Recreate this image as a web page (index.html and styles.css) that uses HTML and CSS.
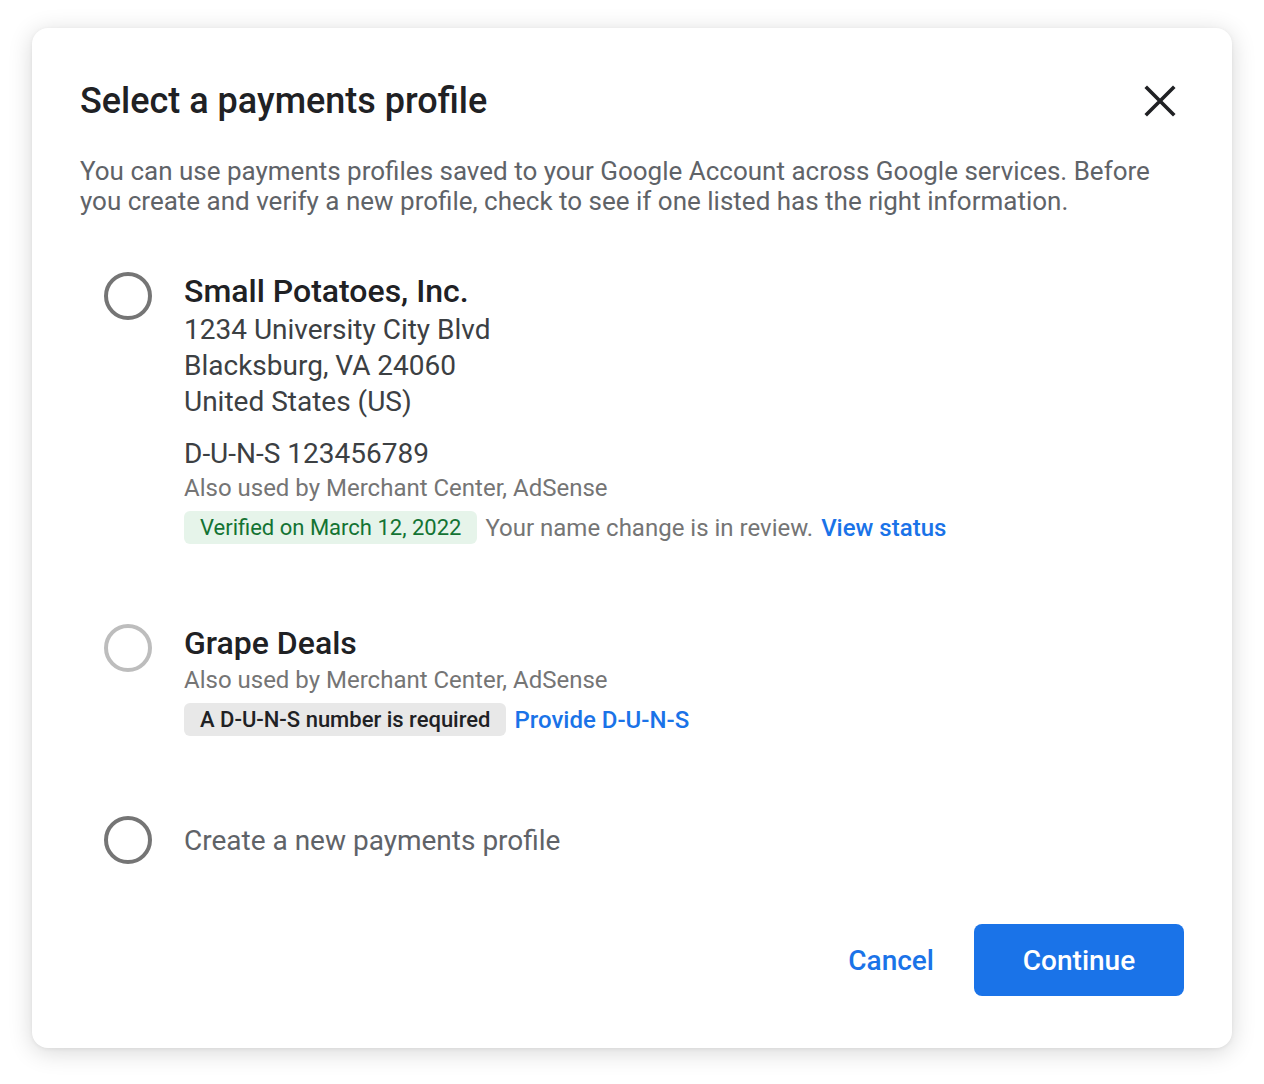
FILE: index.html
```html
<!DOCTYPE html>
<html>
<head>
    <title>Select a payments profile</title>
    <link rel="stylesheet" href="styles.css">
</head>
<body>
    <div class="dialog">
        <div class="dialog-header">
            <h1 class="dialog-title">Select a payments profile</h1>
            <button class="close-button" aria-label="Close">
                <svg width="32" height="32" viewBox="0 0 32 32">
                    <path d="M3 3 L29 29 M29 3 L3 29" stroke="#202124" stroke-width="3.6" stroke-linecap="square"/>
                </svg>
            </button>
        </div>

        <p class="intro">You can use payments profiles saved to your Google Account across Google services. Before you create and verify a new profile, check to see if one listed has the right information.</p>

        <div class="profile-list">
            <div class="profile">
                <span class="radio"></span>
                <div class="profile-info">
                    <div class="profile-name">Small Potatoes, Inc.</div>
                    <div class="address">
                        1234 University City Blvd<br>
                        Blacksburg, VA 24060<br>
                        United States (US)
                    </div>
                    <div class="duns">D-U-N-S 123456789</div>
                    <div class="used-by">Also used by Merchant Center, AdSense</div>
                    <div class="status-row">
                        <span class="chip chip-verified">Verified on March 12, 2022</span>
                        <span class="status-note">Your name change is in review.</span>
                        <a class="link" href="#">View status</a>
                    </div>
                </div>
            </div>

            <div class="profile profile-second">
                <span class="radio radio-light"></span>
                <div class="profile-info">
                    <div class="profile-name">Grape Deals</div>
                    <div class="used-by">Also used by Merchant Center, AdSense</div>
                    <div class="status-row">
                        <span class="chip chip-required">A D-U-N-S number is required</span>
                        <a class="link" href="#">Provide D-U-N-S</a>
                    </div>
                </div>
            </div>

            <div class="profile profile-new">
                <span class="radio"></span>
                <div class="new-label">Create a new payments profile</div>
            </div>
        </div>

        <div class="dialog-actions">
            <button class="btn-text">Cancel</button>
            <button class="btn-primary">Continue</button>
        </div>
    </div>
</body>
</html>
```

FILE: styles.css
```css
body, html {
    margin: 0;
    padding: 0;
    background: #ffffff;
    font-family: Roboto, "Liberation Sans", sans-serif;
}

body {
    padding: 28px 32px;
}

.dialog {
    width: 1200px;
    height: 1020px;
    box-sizing: border-box;
    background: #fff;
    border-radius: 16px;
    box-shadow: 0 4px 24px rgba(0, 0, 0, 0.16), 0 1px 4px rgba(0, 0, 0, 0.06);
    padding: 50px 48px 0 48px;
    display: flex;
    flex-direction: column;
}

.dialog-header {
    display: flex;
    align-items: center;
    justify-content: space-between;
    height: 46px;
}

.dialog-title {
    margin: 0;
    font-size: 36px;
    font-weight: 500;
    color: #202124;
}

.close-button {
    background: none;
    border: none;
    padding: 0;
    margin-right: 8px;
    width: 32px;
    height: 32px;
    cursor: pointer;
}

.intro {
    margin: 32px 0 0 0;
    font-size: 26px;
    line-height: 30px;
    color: #5f6368;
}

.profile-list {
    margin-top: 54px;
    padding-left: 24px;
}

.profile {
    display: flex;
    align-items: flex-start;
}

.radio {
    width: 40px;
    height: 40px;
    border: 4px solid #757575;
    border-radius: 50%;
    flex-shrink: 0;
    margin-top: 2px;
    margin-right: 32px;
}

.radio-light {
    border-color: #bdbdbd;
}

.profile-name {
    font-size: 32px;
    font-weight: 500;
    color: #202124;
    line-height: 42px;
}

.address {
    font-size: 28px;
    line-height: 36px;
    color: #3c4043;
}

.duns {
    font-size: 28px;
    line-height: 36px;
    color: #3c4043;
    margin-top: 16px;
}

.used-by {
    font-size: 24px;
    line-height: 32px;
    color: #757575;
}

.status-row {
    display: flex;
    align-items: center;
    gap: 8px;
    margin-top: 7px;
}

.chip {
    font-size: 22px;
    line-height: 33px;
    padding: 0 16px;
    border-radius: 6px;
}

.chip-verified {
    background: #e6f4ea;
    color: #137333;
}

.chip-required {
    background: #e8e8e8;
    color: #202124;
    font-weight: 500;
}

.status-note {
    font-size: 24px;
    color: #757575;
}

.link {
    font-size: 24px;
    font-weight: 500;
    color: #1a73e8;
    text-decoration: none;
}

.profile-second {
    margin-top: 78px;
}

.profile-new {
    margin-top: 80px;
    align-items: center;
}

.profile-new .radio {
    margin-top: 0;
}

.new-label {
    font-size: 28px;
    color: #5f6368;
}

.dialog-actions {
    display: flex;
    justify-content: flex-end;
    align-items: center;
    gap: 40px;
    margin-top: auto;
    margin-bottom: 52px;
}

.btn-text {
    background: none;
    border: none;
    font-family: inherit;
    font-size: 28px;
    font-weight: 500;
    color: #1a73e8;
    padding: 0;
    cursor: pointer;
}

.btn-primary {
    background: #1a73e8;
    border: none;
    border-radius: 8px;
    font-family: inherit;
    font-size: 28px;
    font-weight: 500;
    color: #fff;
    width: 210px;
    height: 72px;
    cursor: pointer;
}
```
